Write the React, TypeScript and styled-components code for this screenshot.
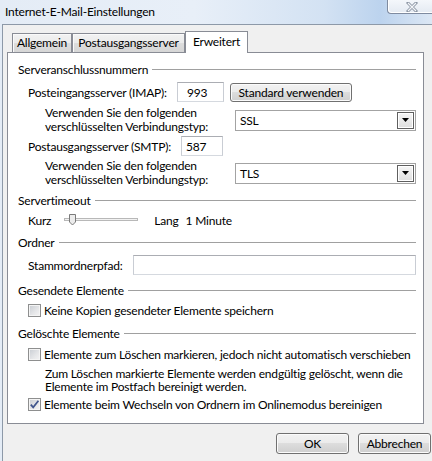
import React from "react";
import styled, { createGlobalStyle } from "styled-components";

const GlobalStyle = createGlobalStyle`
	html, body {
		margin: 0;
		padding: 0;
	}
	body {
		width: 432px;
		height: 461px;
		overflow: hidden;
		background: #dfe8f3;
		font-family: Lato, "Liberation Sans", sans-serif;
		font-size: 12px;
		letter-spacing: -0.2px;
		color: #000;
	}
	* {
		box-sizing: border-box;
	}
`;

const Window = styled.div`
	width: 432px;
	height: 461px;
	display: flex;
	flex-direction: column;
	background: linear-gradient(90deg, #e4ecf6 0%, #e8eff8 45%, #d3e2f3 75%, #bcd3ee 88%, #dce7f4 100%);
`;

const TitleBar = styled.div`
	height: 24px;
	display: flex;
	align-items: flex-start;
	padding-left: 5px;
`;

const Title = styled.span`
	line-height: 23px;
	color: #000;
`;

const CloseButton = styled.div`
	margin-left: auto;
	width: 45px;
	height: 15px;
	margin-top: -1px;
	display: flex;
	align-items: center;
	justify-content: center;
	padding-left: 4px;
	border: 1px solid #7f8ba0;
	border-right: none;
	border-bottom-left-radius: 4px;
	background: linear-gradient(180deg, #f4f7fb 0%, #e4eaf2 100%);
	box-shadow: inset 1px -1px 0 #ffffff;
`;

const Client = styled.div`
	flex: 1;
	margin-left: 2px;
	border-left: 1px solid #8d99a8;
	border-top: 1px solid #8d99a8;
	background: #f0f0f0;
	padding: 6px 0 0 4px;
`;

const TabStrip = styled.div`
	display: flex;
	align-items: flex-end;
	height: 22px;
	padding-left: 5px;
	margin-bottom: -1px;
	position: relative;
	z-index: 1;
`;

const Tab = styled.div<{ $w: number; $active?: boolean }>`
	width: ${(p) => p.$w}px;
	height: ${(p) => (p.$active ? 22 : 19)}px;
	margin-bottom: ${(p) => (p.$active ? 0 : 1)}px;
	display: flex;
	align-items: center;
	justify-content: center;
	padding-bottom: ${(p) => (p.$active ? 3 : 1)}px;
	white-space: nowrap;
	border: 1px solid #898c95;
	border-bottom: none;
	background: ${(p) =>
		p.$active ? "#ffffff" : "linear-gradient(180deg, #f2f2f2 0%, #ebebeb 50%, #dddddd 51%, #d6d6d6 100%)"};
	box-shadow: ${(p) => (p.$active ? "none" : "inset 1px 1px 0 #fafafa")};
`;

const Panel = styled.div`
	width: 417px;
	height: 372px;
	border: 1px solid #898c95;
	background: #ffffff;
	padding: 8px 7px 0 10px;
	display: flex;
	flex-direction: column;
	white-space: nowrap;
`;

const GroupHeader = styled.div<{ $mt?: number }>`
	display: flex;
	align-items: center;
	height: 16px;
	margin-top: ${(p) => p.$mt ?? 0}px;
	gap: 4px;
	&::after {
		content: "";
		flex: 1;
		height: 1px;
		background: #a0a0a0;
		margin-top: 1px;
	}
`;

const Row = styled.div<{ $mt?: number; $h?: number }>`
	display: flex;
	align-items: center;
	height: ${(p) => p.$h ?? 20}px;
	margin-top: ${(p) => p.$mt ?? 0}px;
	padding-left: 10px;
`;

const WideRow = styled.div<{ $mt?: number }>`
	display: flex;
	align-items: center;
	justify-content: space-between;
	height: 28px;
	margin-top: ${(p) => p.$mt ?? 0}px;
	padding-left: 27px;
`;

const Label = styled.span<{ $mr?: number }>`
	margin-right: ${(p) => p.$mr ?? 0}px;
`;

const TwoLineLabel = styled.span`
	line-height: 14px;
`;

const Field = styled.div<{ $w?: number; $indent?: number }>`
	${(p) => (p.$w ? `width: ${p.$w}px;` : "flex: 1;")}
	height: 20px;
	display: flex;
	align-items: center;
	padding-left: ${(p) => p.$indent ?? 4}px;
	background: #ffffff;
	border: 1px solid;
	border-color: #abadb3 #c9cdd4 #d5d9df #c9cdd4;
`;

const Combo = styled.div`
	width: 181px;
	height: 21px;
	display: flex;
	align-items: center;
	padding: 0 1px 0 4px;
	background: #ffffff;
	border: 1px solid #a3a3a3;
`;

const ComboText = styled.span`
	flex: 1;
`;

const ComboArrow = styled.div`
	width: 17px;
	height: 17px;
	display: flex;
	align-items: center;
	justify-content: center;
	border: 1px solid #5f5f5f;
	background: linear-gradient(180deg, #f6f6f6 0%, #dedede 100%);
	box-shadow: inset 0 0 0 1px #ffffff;
`;

const PushButton = styled.div<{ $w: number; $h?: number; $ml?: number }>`
	width: ${(p) => p.$w}px;
	height: ${(p) => p.$h ?? 21}px;
	margin-left: ${(p) => p.$ml ?? 0}px;
	display: flex;
	align-items: center;
	justify-content: center;
	border: 1px solid #707070;
	border-radius: 3px;
	background: linear-gradient(180deg, #f2f2f2 0%, #ebebeb 49%, #dddddd 50%, #cfcfcf 100%);
	box-shadow: inset 0 0 0 1px #fbfbfb;
`;

const SliderText = styled.span<{ $ml?: number }>`
	margin-left: ${(p) => p.$ml ?? 0}px;
`;

const CheckRow = styled.div<{ $mt?: number }>`
	display: flex;
	align-items: center;
	gap: 3px;
	height: 16px;
	margin-top: ${(p) => p.$mt ?? 0}px;
	padding-left: 10px;
`;

const CheckBox = styled.div`
	flex-shrink: 0;
	width: 13px;
	height: 13px;
	border: 1px solid #8e8f8f;
	background: linear-gradient(135deg, #c8ccd2 0%, #e6e7e9 60%, #f4f4f4 100%);
	box-shadow: inset 0 0 0 1px #f4f4f4;
	display: flex;
	align-items: center;
	justify-content: center;
`;

const Description = styled.div<{ $mt?: number }>`
	margin-top: ${(p) => p.$mt ?? 0}px;
	padding-left: 27px;
	line-height: 13px;
`;

const ButtonBar = styled.div`
	display: flex;
	justify-content: flex-end;
	gap: 9px;
	width: 424px;
	margin-top: 9px;
`;

const Check: React.FC<{ checked?: boolean }> = ({ checked }) => (
	<CheckBox>
		{checked && (
			<svg width="11" height="11" viewBox="0 0 11 11">
				<path d="M1.8 5.6 L4.2 8.4 L9.4 1.8" fill="none" stroke="#3f548c" strokeWidth="1.7" />
			</svg>
		)}
	</CheckBox>
);

const Select: React.FC<{ value: string }> = ({ value }) => (
	<Combo>
		<ComboText>{value}</ComboText>
		<ComboArrow>
			<svg width="7" height="4" viewBox="0 0 7 4">
				<path d="M0 0 H7 L3.5 4 Z" fill="#000" />
			</svg>
		</ComboArrow>
	</Combo>
);

const Slider = () => (
	<svg width="74" height="14" viewBox="0 0 74 14" style={{ marginLeft: 13 }}>
		<rect x="0.5" y="5.5" width="73" height="2" fill="#f2f2f2" stroke="#b8b8b8" strokeWidth="1" />
		<path d="M5.5 1.5 H11.5 V9 L8.5 12 L5.5 9 Z" fill="#ececec" stroke="#7b7b7b" strokeWidth="1" />
	</svg>
);

export default function App() {
	return (
		<>
			<GlobalStyle />
			<Window>
				<TitleBar>
					<Title>Internet-E-Mail-Einstellungen</Title>
					<CloseButton>
						<svg width="12" height="10" viewBox="0 0 12 10">
							<path d="M2 1 L10 9 M10 1 L2 9" stroke="#8c96a4" strokeWidth="3" strokeLinecap="square" />
							<path d="M2 1 L10 9 M10 1 L2 9" stroke="#f4f6f9" strokeWidth="1.2" />
						</svg>
					</CloseButton>
				</TitleBar>
				<Client>
					<TabStrip>
						<Tab $w={60}>Allgemein</Tab>
						<Tab $w={113}>Postausgangsserver</Tab>
						<Tab $w={63} $active>
							Erweitert
						</Tab>
					</TabStrip>
					<Panel>
						<GroupHeader>Serveranschlussnummern</GroupHeader>
						<Row $mt={5}>
							<Label $mr={10}>Posteingangsserver (IMAP):</Label>
							<Field $w={47} $indent={9}>
								993
							</Field>
							<PushButton $w={122} $h={19} $ml={6}>
								Standard verwenden
							</PushButton>
						</Row>
						<WideRow $mt={4}>
							<TwoLineLabel>
								Verwenden Sie den folgenden
								<br />
								verschlüsselten Verbindungstyp:
							</TwoLineLabel>
							<Select value="SSL" />
						</WideRow>
						<Row $mt={2}>
							<Label $mr={10}>Postausgangsserver (SMTP):</Label>
							<Field $w={42} $indent={4}>
								587
							</Field>
						</Row>
						<WideRow $mt={3}>
							<TwoLineLabel>
								Verwenden Sie den folgenden
								<br />
								verschlüsselten Verbindungstyp:
							</TwoLineLabel>
							<Select value="TLS" />
						</WideRow>
						<GroupHeader $mt={5}>Servertimeout</GroupHeader>
						<Row $mt={4} $h={16}>
							<span>Kurz</span>
							<Slider />
							<SliderText $ml={16}>Lang</SliderText>
							<SliderText $ml={7}>1 Minute</SliderText>
						</Row>
						<GroupHeader $mt={6}>Ordner</GroupHeader>
						<Row $mt={5}>
							<Label $mr={10}>Stammordnerpfad:</Label>
							<Field />
						</Row>
						<GroupHeader $mt={7}>Gesendete Elemente</GroupHeader>
						<CheckRow $mt={4}>
							<Check />
							<span>Keine Kopien gesendeter Elemente speichern</span>
						</CheckRow>
						<GroupHeader $mt={7}>Gelöschte Elemente</GroupHeader>
						<CheckRow $mt={5}>
							<Check />
							<span>Elemente zum Löschen markieren, jedoch nicht automatisch verschieben</span>
						</CheckRow>
						<Description $mt={5}>
							Zum Löschen markierte Elemente werden endgültig gelöscht, wenn die
							<br />
							Elemente im Postfach bereinigt werden.
						</Description>
						<CheckRow $mt={3}>
							<Check checked />
							<span>Elemente beim Wechseln von Ordnern im Onlinemodus bereinigen</span>
						</CheckRow>
					</Panel>
					<ButtonBar>
						<PushButton $w={73}>OK</PushButton>
						<PushButton $w={73}>Abbrechen</PushButton>
					</ButtonBar>
				</Client>
			</Window>
		</>
	);
}
